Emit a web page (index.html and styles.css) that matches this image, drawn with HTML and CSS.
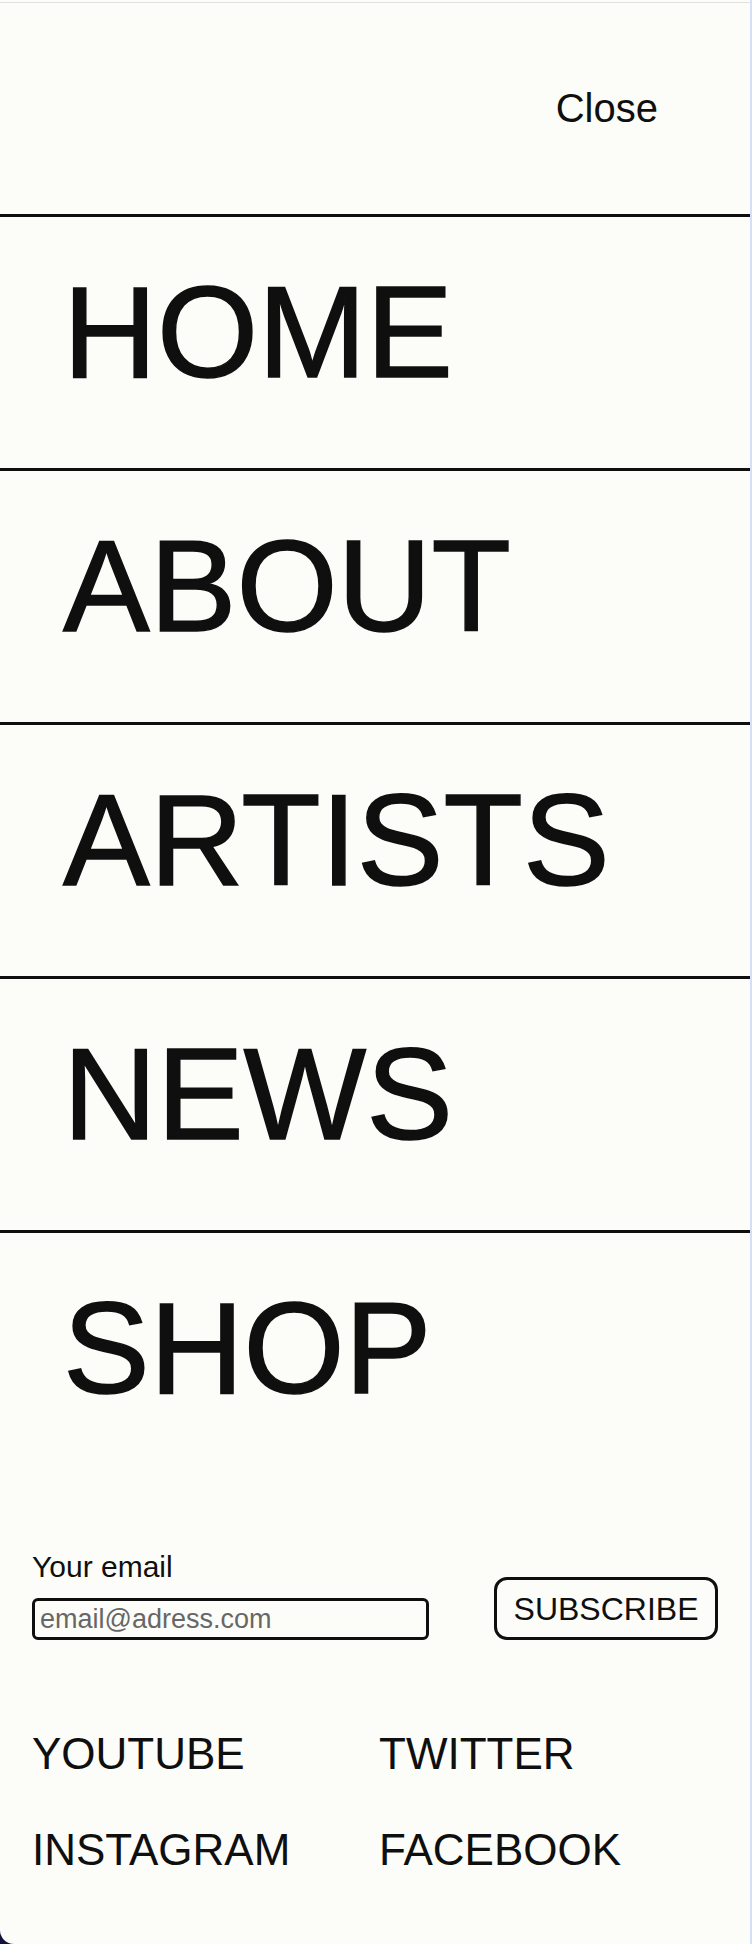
FILE: index.html
```html
<!DOCTYPE html>
<html lang="en">
<head>
<meta charset="utf-8">
<title>Menu</title>
<link rel="stylesheet" href="styles.css">
</head>
<body>
<div class="panel">
  <div class="topline"></div>
  <header class="menu-header">
    <button class="close-btn" type="button">Close</button>
  </header>
  <nav class="menu-nav">
    <a class="nav-item" href="#">HOME</a>
    <a class="nav-item" href="#">ABOUT</a>
    <a class="nav-item" href="#">ARTISTS</a>
    <a class="nav-item" href="#">NEWS</a>
    <a class="nav-item" href="#">SHOP</a>
  </nav>
  <form class="newsletter">
    <label class="field">
      <span class="field-label">Your email</span>
      <input class="field-input" type="email" placeholder="email@adress.com">
    </label>
    <button class="subscribe" type="button">SUBSCRIBE</button>
  </form>
  <ul class="socials">
    <li><a href="#">YOUTUBE</a></li>
    <li><a href="#">TWITTER</a></li>
    <li><a href="#">INSTAGRAM</a></li>
    <li><a href="#">FACEBOOK</a></li>
  </ul>
</div>
</body>
</html>
```

FILE: styles.css
```css
html, body {
  margin: 0;
  padding: 0;
}

body {
  background: linear-gradient(to right, #12123c 0 60px, #d5dff9 60px);
  font-family: "Liberation Sans", Arial, Helvetica, sans-serif;
  color: #0f0f0f;
  width: 752px;
  height: 1944px;
  overflow: hidden;
}

.panel {
  width: 750px;
  height: 1944px;
  background: #fcfdf8;
  border-bottom-left-radius: 14px;
  display: flex;
  flex-direction: column;
  overflow: hidden;
}

.topline {
  height: 1px;
  margin-top: 2px;
  background: #e1e1e1;
}

.menu-header {
  height: 211px;
  box-sizing: border-box;
  padding: 82px 92px 0 0;
  display: flex;
  justify-content: flex-end;
  align-items: flex-start;
}

.close-btn {
  background: none;
  border: 0;
  padding: 0;
  margin: 0;
  font-family: inherit;
  font-size: 40px;
  line-height: 46px;
  color: #0f0f0f;
  cursor: pointer;
}

.menu-nav {
  display: flex;
  flex-direction: column;
}

.nav-item {
  display: block;
  border-top: 3px solid #0f0f0f;
  padding: 40px 0 61px 63px;
  font-size: 130px;
  line-height: 150px;
  color: #0f0f0f;
  -webkit-text-stroke: 1.5px #0f0f0f;
  text-decoration: none;
  white-space: nowrap;
}

.newsletter {
  margin: 0;
  padding: 67px 32px 0 32px;
  display: flex;
  justify-content: space-between;
  align-items: flex-end;
}

.field {
  display: flex;
  flex-direction: column;
}

.field-label {
  font-size: 30px;
  line-height: 32px;
  margin-bottom: 15px;
}

.field-input {
  width: 397px;
  height: 42px;
  box-sizing: border-box;
  border: 3px solid #0f0f0f;
  border-radius: 6px;
  background: #fcfdf8;
  padding: 0 5px;
  font-family: inherit;
  font-size: 27px;
  color: #0f0f0f;
  outline: none;
}

.field-input::placeholder {
  color: #676767;
}

.subscribe {
  height: 63px;
  width: 224px;
  box-sizing: border-box;
  border: 3px solid #0f0f0f;
  border-radius: 13px;
  background: transparent;
  padding: 0;
  font-family: inherit;
  font-size: 32px;
  line-height: 1;
  color: #0f0f0f;
  cursor: pointer;
}

.socials {
  list-style: none;
  margin: 89px 0 0 0;
  padding: 0 32px;
  display: grid;
  grid-template-columns: 1fr 1fr;
  column-gap: 8px;
  row-gap: 46px;
}

.socials a {
  display: block;
  font-size: 44px;
  line-height: 50px;
  color: #0f0f0f;
  text-decoration: none;
}
```
